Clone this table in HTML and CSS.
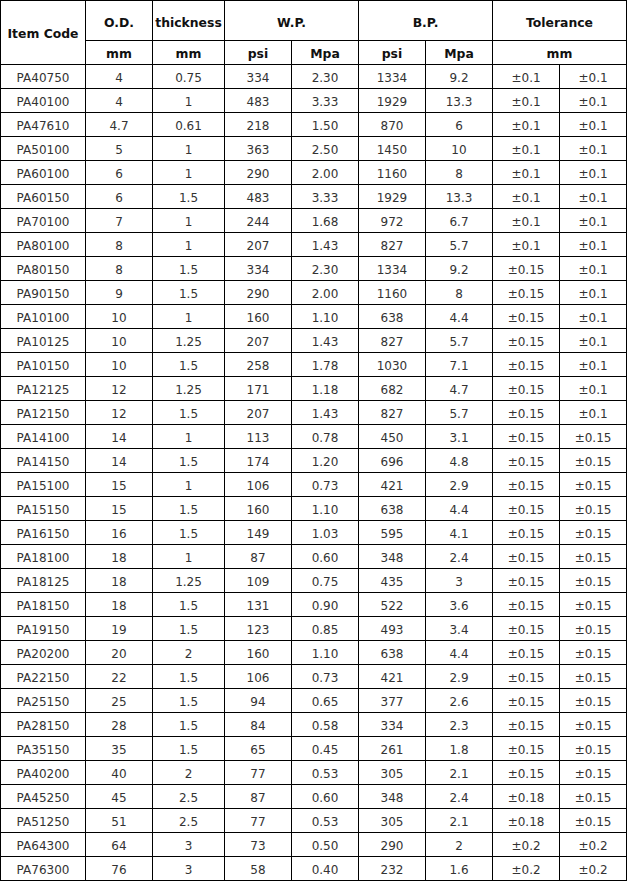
FILE: index.html
```html
<!DOCTYPE html>
<html>
<head>
<meta charset="utf-8">
<link rel="stylesheet" href="styles.css">
</head>
<body>
<table class="spec">
<colgroup>
<col class="c-code"><col class="c-n"><col class="c-t"><col class="c-n"><col class="c-n"><col class="c-n"><col class="c-n"><col class="c-n"><col class="c-n">
</colgroup>
<thead>
<tr class="h1"><th rowspan="2" class="code-head">Item Code</th><th>O.D.</th><th>thickness</th><th colspan="2">W.P.</th><th colspan="2">B.P.</th><th colspan="2">Tolerance</th></tr>
<tr class="h2"><th>mm</th><th>mm</th><th>psi</th><th>Mpa</th><th>psi</th><th>Mpa</th><th colspan="2">mm</th></tr>
</thead>
<tbody>
<tr><td>PA40750</td><td>4</td><td>0.75</td><td>334</td><td>2.30</td><td>1334</td><td>9.2</td><td>±0.1</td><td>±0.1</td></tr>
<tr><td>PA40100</td><td>4</td><td>1</td><td>483</td><td>3.33</td><td>1929</td><td>13.3</td><td>±0.1</td><td>±0.1</td></tr>
<tr><td>PA47610</td><td>4.7</td><td>0.61</td><td>218</td><td>1.50</td><td>870</td><td>6</td><td>±0.1</td><td>±0.1</td></tr>
<tr><td>PA50100</td><td>5</td><td>1</td><td>363</td><td>2.50</td><td>1450</td><td>10</td><td>±0.1</td><td>±0.1</td></tr>
<tr><td>PA60100</td><td>6</td><td>1</td><td>290</td><td>2.00</td><td>1160</td><td>8</td><td>±0.1</td><td>±0.1</td></tr>
<tr><td>PA60150</td><td>6</td><td>1.5</td><td>483</td><td>3.33</td><td>1929</td><td>13.3</td><td>±0.1</td><td>±0.1</td></tr>
<tr><td>PA70100</td><td>7</td><td>1</td><td>244</td><td>1.68</td><td>972</td><td>6.7</td><td>±0.1</td><td>±0.1</td></tr>
<tr><td>PA80100</td><td>8</td><td>1</td><td>207</td><td>1.43</td><td>827</td><td>5.7</td><td>±0.1</td><td>±0.1</td></tr>
<tr><td>PA80150</td><td>8</td><td>1.5</td><td>334</td><td>2.30</td><td>1334</td><td>9.2</td><td>±0.15</td><td>±0.1</td></tr>
<tr><td>PA90150</td><td>9</td><td>1.5</td><td>290</td><td>2.00</td><td>1160</td><td>8</td><td>±0.15</td><td>±0.1</td></tr>
<tr><td>PA10100</td><td>10</td><td>1</td><td>160</td><td>1.10</td><td>638</td><td>4.4</td><td>±0.15</td><td>±0.1</td></tr>
<tr><td>PA10125</td><td>10</td><td>1.25</td><td>207</td><td>1.43</td><td>827</td><td>5.7</td><td>±0.15</td><td>±0.1</td></tr>
<tr><td>PA10150</td><td>10</td><td>1.5</td><td>258</td><td>1.78</td><td>1030</td><td>7.1</td><td>±0.15</td><td>±0.1</td></tr>
<tr><td>PA12125</td><td>12</td><td>1.25</td><td>171</td><td>1.18</td><td>682</td><td>4.7</td><td>±0.15</td><td>±0.1</td></tr>
<tr><td>PA12150</td><td>12</td><td>1.5</td><td>207</td><td>1.43</td><td>827</td><td>5.7</td><td>±0.15</td><td>±0.1</td></tr>
<tr><td>PA14100</td><td>14</td><td>1</td><td>113</td><td>0.78</td><td>450</td><td>3.1</td><td>±0.15</td><td>±0.15</td></tr>
<tr><td>PA14150</td><td>14</td><td>1.5</td><td>174</td><td>1.20</td><td>696</td><td>4.8</td><td>±0.15</td><td>±0.15</td></tr>
<tr><td>PA15100</td><td>15</td><td>1</td><td>106</td><td>0.73</td><td>421</td><td>2.9</td><td>±0.15</td><td>±0.15</td></tr>
<tr><td>PA15150</td><td>15</td><td>1.5</td><td>160</td><td>1.10</td><td>638</td><td>4.4</td><td>±0.15</td><td>±0.15</td></tr>
<tr><td>PA16150</td><td>16</td><td>1.5</td><td>149</td><td>1.03</td><td>595</td><td>4.1</td><td>±0.15</td><td>±0.15</td></tr>
<tr><td>PA18100</td><td>18</td><td>1</td><td>87</td><td>0.60</td><td>348</td><td>2.4</td><td>±0.15</td><td>±0.15</td></tr>
<tr><td>PA18125</td><td>18</td><td>1.25</td><td>109</td><td>0.75</td><td>435</td><td>3</td><td>±0.15</td><td>±0.15</td></tr>
<tr><td>PA18150</td><td>18</td><td>1.5</td><td>131</td><td>0.90</td><td>522</td><td>3.6</td><td>±0.15</td><td>±0.15</td></tr>
<tr><td>PA19150</td><td>19</td><td>1.5</td><td>123</td><td>0.85</td><td>493</td><td>3.4</td><td>±0.15</td><td>±0.15</td></tr>
<tr><td>PA20200</td><td>20</td><td>2</td><td>160</td><td>1.10</td><td>638</td><td>4.4</td><td>±0.15</td><td>±0.15</td></tr>
<tr><td>PA22150</td><td>22</td><td>1.5</td><td>106</td><td>0.73</td><td>421</td><td>2.9</td><td>±0.15</td><td>±0.15</td></tr>
<tr><td>PA25150</td><td>25</td><td>1.5</td><td>94</td><td>0.65</td><td>377</td><td>2.6</td><td>±0.15</td><td>±0.15</td></tr>
<tr><td>PA28150</td><td>28</td><td>1.5</td><td>84</td><td>0.58</td><td>334</td><td>2.3</td><td>±0.15</td><td>±0.15</td></tr>
<tr><td>PA35150</td><td>35</td><td>1.5</td><td>65</td><td>0.45</td><td>261</td><td>1.8</td><td>±0.15</td><td>±0.15</td></tr>
<tr><td>PA40200</td><td>40</td><td>2</td><td>77</td><td>0.53</td><td>305</td><td>2.1</td><td>±0.15</td><td>±0.15</td></tr>
<tr><td>PA45250</td><td>45</td><td>2.5</td><td>87</td><td>0.60</td><td>348</td><td>2.4</td><td>±0.18</td><td>±0.15</td></tr>
<tr><td>PA51250</td><td>51</td><td>2.5</td><td>77</td><td>0.53</td><td>305</td><td>2.1</td><td>±0.18</td><td>±0.15</td></tr>
<tr><td>PA64300</td><td>64</td><td>3</td><td>73</td><td>0.50</td><td>290</td><td>2</td><td>±0.2</td><td>±0.2</td></tr>
<tr><td>PA76300</td><td>76</td><td>3</td><td>58</td><td>0.40</td><td>232</td><td>1.6</td><td>±0.2</td><td>±0.2</td></tr>
</tbody>
</table>
</body>
</html>
```
FILE: styles.css
```css
html, body {
  margin: 0;
  padding: 0;
  background: #fff;
}

.spec {
  border-collapse: collapse;
  table-layout: fixed;
  width: 627px;
  font-family: "DejaVu Sans", Verdana, sans-serif;
  font-size: 12px;
  line-height: 14px;
  color: #333;
}

.c-code { width: 85px; }
.c-n { width: 67px; }
.c-t { width: 72px; }

.spec th,
.spec td {
  border: 1px solid #000;
  padding: 2px 0 0;
  text-align: center;
  vertical-align: middle;
  white-space: nowrap;
  overflow: hidden;
}

.spec th {
  font-weight: bold;
  font-size: 12.4px;
  color: #111;
}

.spec .h1 th { padding-top: 4px; }
.spec .h1 .code-head { padding-top: 2px; }

.spec .h1 { height: 40px; }
.spec .h2 { height: 24px; }
.spec tbody tr { height: 24px; }
```
